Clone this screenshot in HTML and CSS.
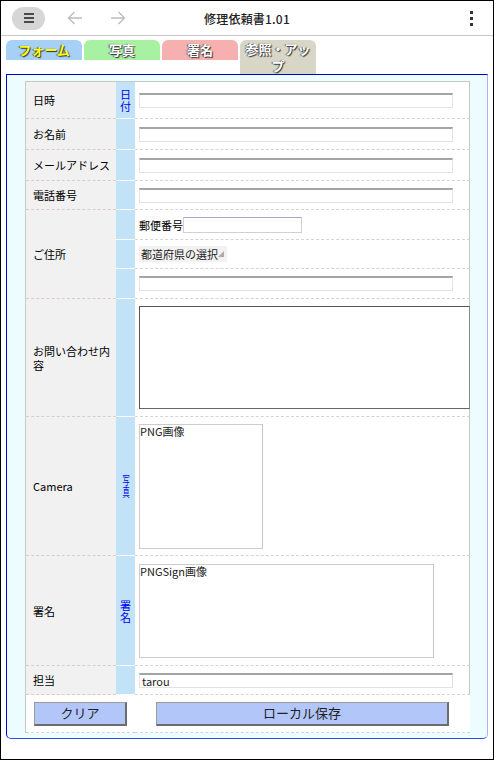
FILE: index.html
```html
<!DOCTYPE html>
<html lang="ja">
<head>
<meta charset="utf-8">
<title>修理依頼書1.01</title>
<link rel="stylesheet" href="styles.css">
</head>
<body>
<div class="frame">
  <header class="topbar">
    <div class="bar-left">
      <div class="menu-btn"><span></span><span></span><span></span></div>
      <svg class="nav-arrow back" viewBox="0 0 16 14" width="16" height="14"><path d="M15 7H1.5M7.5 1L1.5 7l6 6" fill="none" stroke="#bdbdbd" stroke-width="1.4"/></svg>
      <svg class="nav-arrow fwd" viewBox="0 0 16 14" width="16" height="14"><path d="M1 7h13.5M8.5 1l6 6-6 6" fill="none" stroke="#bdbdbd" stroke-width="1.4"/></svg>
    </div>
    <div class="title">修理依頼書1.01</div>
    <div class="bar-right"><div class="kebab"><i></i><i></i><i></i></div></div>
  </header>

  <nav class="tabs">
    <div class="tab tab-form">フォーム</div>
    <div class="tab tab-photo">写真</div>
    <div class="tab tab-sign">署名</div>
    <div class="tab tab-ref">参照・アップ</div>
  </nav>

  <main class="panel">
    <div class="form-grid">
      <div class="lbl">日時</div>
      <div class="side"><a class="side-link">日付</a></div>
      <div class="val"><div class="field wide"></div></div>

      <div class="lbl">お名前</div>
      <div class="side"></div>
      <div class="val"><div class="field wide"></div></div>

      <div class="lbl">メールアドレス</div>
      <div class="side"></div>
      <div class="val"><div class="field wide"></div></div>

      <div class="lbl">電話番号</div>
      <div class="side"></div>
      <div class="val"><div class="field wide"></div></div>

      <div class="lbl span3">ご住所</div>
      <div class="side"></div>
      <div class="val"><span class="small-label">郵便番号</span><div class="field zip"></div></div>
      <div class="side"></div>
      <div class="val"><div class="select">都道府県の選択<span class="sel-arrow"></span></div></div>
      <div class="side"></div>
      <div class="val"><div class="field wide"></div></div>

      <div class="lbl">お問い合わせ内容</div>
      <div class="side"></div>
      <div class="val"><div class="textarea"></div></div>

      <div class="lbl">Camera</div>
      <div class="side"><a class="side-link squeeze">写真</a></div>
      <div class="val"><div class="imgbox photo">PNG画像</div></div>

      <div class="lbl">署名</div>
      <div class="side"><a class="side-link">署名</a></div>
      <div class="val"><div class="imgbox signbox">PNGSign画像</div></div>

      <div class="lbl">担当</div>
      <div class="side"></div>
      <div class="val"><div class="field wide">tarou</div></div>

      <div class="btn-cell span2"><div class="btn btn-clear">クリア</div></div>
      <div class="btn-cell"><div class="btn btn-save">ローカル保存</div></div>
    </div>
  </main>
</div>
</body>
</html>
```

FILE: styles.css
```css
html, body {
  margin: 0;
  padding: 0;
  background: #fff;
}
body {
  font-family: "Noto Sans CJK JP", "Noto Sans", sans-serif;
  color: #000;
}
.frame {
  width: 494px;
  height: 760px;
  box-sizing: border-box;
  border: 1px solid #000;
  overflow: hidden;
}

/* top bar */
.topbar {
  height: 34px;
  border-bottom: 1px solid #c8c8c8;
  display: grid;
  grid-template-columns: 1fr auto 1fr;
  align-items: center;
}
.bar-left {
  display: flex;
  align-items: center;
  padding-left: 11px;
}
.menu-btn {
  width: 33px;
  height: 23px;
  border-radius: 12px;
  background: #d6d6d6;
  display: flex;
  flex-direction: column;
  align-items: center;
  justify-content: center;
  gap: 2px;
}
.menu-btn span {
  display: block;
  width: 10px;
  height: 2px;
  background: #4a4a4a;
}
.nav-arrow { display: block; }
.nav-arrow.back { margin-left: 22px; }
.nav-arrow.fwd { margin-left: 27px; }
.title {
  font-size: 12px;
  color: #222;
  letter-spacing: 0.2px;
  font-weight: 500;
}
.bar-right {
  display: flex;
  justify-content: flex-end;
  padding-right: 20px;
}
.kebab {
  display: flex;
  flex-direction: column;
  gap: 3px;
}
.kebab i {
  display: block;
  width: 3px;
  height: 3px;
  background: #333;
}

/* tabs */
.tabs {
  display: flex;
  align-items: flex-start;
  gap: 2px;
  margin-top: 4px;
  padding-left: 5px;
  height: 34px;
}
.tab {
  width: 76px;
  flex: none;
  height: 20px;
  box-sizing: border-box;
  border-radius: 6px 6px 0 0;
  text-align: center;
  font-size: 13px;
  font-weight: bold;
  line-height: 19px;
  color: #fff;
  text-shadow: 1px 1px 1px #333, -1px 0 1px #555;
}
.tab-form { background: #a6d0f6; color: #ffff00; }
.tab-photo { background: #a8f0a2; }
.tab-sign { background: #f6b0b0; }
.tab-ref {
  background: #d8d6c6;
  height: 34px;
  padding: 0 2px;
  line-height: 17px;
}

/* panel */
.panel {
  margin: 0 5px;
  height: 665px;
  box-sizing: border-box;
  border: 1px solid;
  border-color: #0000cc #aab2ff #3344ff #0000cc;
  border-radius: 0 0 5px 5px;
  background: #ecfcff;
  padding: 6px 17px 5px 18px;
}
.form-grid {
  display: grid;
  grid-template-columns: 90px 19px 1fr;
  grid-template-rows: 37px 31px 31px 29px 30px 29px 30px 118px 139px 110px 29px 38px;
  border: 1px solid #c8c8c8;
  border-bottom: none;
  background: #fff;
  font-size: 11px;
}
.lbl {
  background: #f1f1f1;
  border-bottom: 1px dashed #d8ccd2;
  padding: 0 3px 0 7px;
  display: flex;
  align-items: center;
  line-height: 14px;
}
.span3 { grid-row: span 3; }
.span2 { grid-column: span 2; }
.side {
  background: #c2e3f7;
  border-bottom: 1px solid #fff;
  display: flex;
  align-items: center;
  justify-content: center;
}
.side-link {
  color: #0000ee;
  width: 11px;
  line-height: 12px;
  text-align: center;
  word-break: break-all;
}
.squeeze {
  display: block;
  width: 12px;
  font-size: 12px;
  transform: scaleX(0.6);
  line-height: 12px;
}
.val {
  border-bottom: 1px dashed #d4d4d4;
  padding-left: 4px;
  display: flex;
  align-items: center;
}
.field {
  height: 15px;
  box-sizing: border-box;
  border: 1px solid #e2e2e2;
  border-top: 2px solid #a4a4a4;
  background: #fff;
  font-size: 11px;
  line-height: 12px;
  padding-left: 2px;
  color: #222;
}
.field.wide { width: 314px; }
.small-label { margin-right: 0; }
.field.zip {
  width: 119px;
  height: 16px;
  border: 1px solid #d0d0d8;
  border-top: 1px solid #a8a8c8;
}
.select {
  width: 88px;
  height: 16px;
  box-sizing: border-box;
  background: #f2f2f2;
  font-size: 11px;
  line-height: 16px;
  padding-left: 2px;
  position: relative;
  color: #222;
}
.sel-arrow {
  position: absolute;
  right: 3px;
  top: 5px;
  width: 0;
  height: 0;
  border-left: 6px solid transparent;
  border-bottom: 6px solid #aaa;
}
.textarea {
  width: 331px;
  height: 103px;
  box-sizing: border-box;
  border: 1px solid #555;
  border-right-color: #888;
  border-bottom-color: #666;
  background: #fff;
}
.imgbox {
  box-sizing: border-box;
  border: 1px solid #ccc;
  border-right-color: #c4c4c4;
  font-size: 11px;
  line-height: 13px;
  color: #222;
  align-self: center;
}
.imgbox.photo { width: 124px; height: 125px; }
.imgbox.signbox { width: 295px; height: 94px; }
.btn-cell {
  border-bottom: 1px dashed #d4d4d4;
  display: flex;
  align-items: center;
  justify-content: center;
  background: #fff;
}
.btn {
  height: 24px;
  box-sizing: border-box;
  background: #b2c6fa;
  border: 1px solid #9a9a9a;
  border-right: 2px solid #6c6c6c;
  border-bottom: 2px solid #6c6c6c;
  font-size: 13px;
  line-height: 20px;
  text-align: center;
  color: #222;
}
.btn-clear { width: 93px; }
.btn-save { width: 293px; }
```
